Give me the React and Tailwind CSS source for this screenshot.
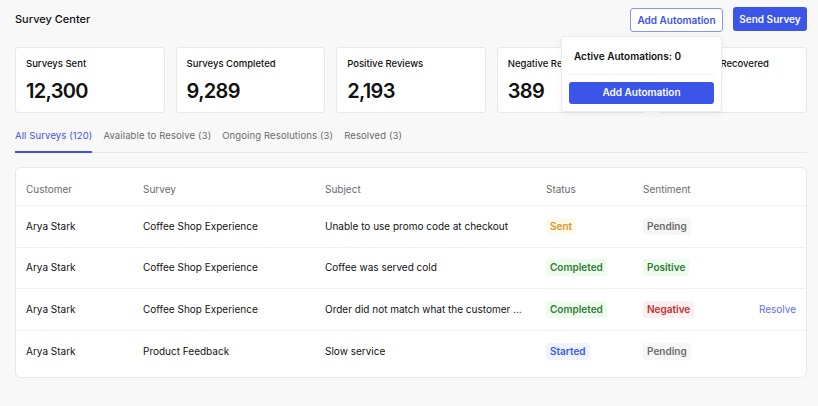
import React from 'react';

const stats = [
  { label: 'Surveys Sent', value: '12,300' },
  { label: 'Surveys Completed', value: '9,289' },
  { label: 'Positive Reviews', value: '2,193' },
  { label: 'Negative Reviews', value: '389' },
  { label: 'Customers Recovered', value: '57' },
];

const tabs = [
  'All Surveys (120)',
  'Available to Resolve (3)',
  'Ongoing Resolutions (3)',
  'Resolved (3)',
];

const badgeStyles = {
  Sent: 'bg-[#fefbea] text-[#e48f2a]',
  Completed: 'bg-[#eefcee] text-[#2e7d32]',
  Started: 'bg-[#eef3fe] text-[#3d5ae8]',
  Pending: 'bg-[#f6f6f6] text-[#6b6b6b]',
  Positive: 'bg-[#eefcee] text-[#2e7d32]',
  Negative: 'bg-[#fdefef] text-[#c62e2e]',
};

const rows = [
  {
    customer: 'Arya Stark',
    survey: 'Coffee Shop Experience',
    subject: 'Unable to use promo code at checkout',
    status: 'Sent',
    sentiment: 'Pending',
  },
  {
    customer: 'Arya Stark',
    survey: 'Coffee Shop Experience',
    subject: 'Coffee was served cold',
    status: 'Completed',
    sentiment: 'Positive',
  },
  {
    customer: 'Arya Stark',
    survey: 'Coffee Shop Experience',
    subject: 'Order did not match what the customer wanted',
    status: 'Completed',
    sentiment: 'Negative',
    resolve: true,
  },
  {
    customer: 'Arya Stark',
    survey: 'Product Feedback',
    subject: 'Slow service',
    status: 'Started',
    sentiment: 'Pending',
  },
];

const Badge = ({ text }) => (
  <span
    className={`inline-flex items-center h-[17px] px-[4px] rounded-[3px] text-[10px] font-semibold ${badgeStyles[text]}`}
  >
    {text}
  </span>
);

const cols = 'grid grid-cols-[117px_182px_221px_97px_1fr_auto] items-center pl-[10px] pr-[10px]';

export default function App() {
  return (
    <div
      className="w-full h-[406px] bg-[#f8f8f8] pl-[15px] pr-[11px] pt-[7px] text-[#111] overflow-hidden"
      style={{ fontFamily: 'Inter, "Noto Sans", sans-serif' }}
    >
      {/* Header */}
      <div className="flex items-center justify-between h-[24px]">
        <h1 className="text-[11px] font-medium">Survey Center</h1>
        <div className="flex items-center gap-[10px]">
          <div className="relative">
            <button className="h-[24px] w-[93px] rounded-[3px] border border-[#8796f0] bg-white text-[10px] font-semibold text-[#3a55e8]">
              Add Automation
            </button>
            <div className="absolute right-[1px] top-[30px] z-10 w-[161px] rounded-[3px] border border-[#ebebeb] bg-white px-[7px] pt-[13px] pb-[7px] shadow-[0_2px_6px_rgba(0,0,0,0.05)]">
              <div className="px-[5px] text-[10px] font-semibold leading-[12px]">
                Active Automations: 0
              </div>
              <div className="mt-[12px] border-t border-[#f0f0f0]" />
              <button className="mt-[7px] h-[22px] w-full rounded-[3px] bg-[#3a55e8] text-[10px] font-semibold text-white">
                Add Automation
              </button>
            </div>
          </div>
          <button className="h-[24px] w-[74px] rounded-[3px] bg-[#3a55e8] text-[10px] font-semibold text-white">
            Send Survey
          </button>
        </div>
      </div>

      {/* Stat cards */}
      <div className="mt-[16px] grid grid-cols-5 gap-[11px]">
        {stats.map((s) => (
          <div
            key={s.label}
            className="h-[66px] rounded-[3px] border border-[#e8e8e8] bg-white px-[10px] pt-[10px]"
          >
            <p className="text-[9.5px] font-medium leading-[12px]">{s.label}</p>
            <p className="mt-[9px] text-[20px] font-semibold leading-[24px] tracking-[-0.7px]">
              {s.value}
            </p>
          </div>
        ))}
      </div>

      {/* Tabs */}
      <div className="mt-[17px] flex gap-[11px] border-b border-[#e6e6e6]">
        {tabs.map((t, i) => (
          <div
            key={t}
            className={`-mb-px border-b-2 pb-[9px] text-[9.5px] leading-[12px] tracking-[0.12px] ${
              i === 0
                ? 'border-[#3a55e8] text-[#3a55e8]'
                : 'border-transparent text-[#6b6b6b]'
            }`}
          >
            {t}
          </div>
        ))}
      </div>

      {/* Table */}
      <div className="mt-[14px] rounded-[6px] border border-[#e8e8e8] bg-white pb-[5px]">
        <div className={`${cols} h-[38px] pt-[5px] border-b border-[#f0f0f0] text-[10px] text-[#6b6b6b]`}>
          <span>Customer</span>
          <span>Survey</span>
          <span>Subject</span>
          <span>Status</span>
          <span>Sentiment</span>
          <span />
        </div>
        {rows.map((r, i) => (
          <div
            key={i}
            className={`${cols} h-[41.5px] text-[10px] ${
              i < rows.length - 1 ? 'border-b border-[#f0f0f0]' : ''
            }`}
          >
            <span>{r.customer}</span>
            <span>{r.survey}</span>
            <span className="truncate pr-[22px]">{r.subject}</span>
            <span>
              <Badge text={r.status} />
            </span>
            <span>
              <Badge text={r.sentiment} />
            </span>
            <span className="text-[#5a6ef0]">{r.resolve ? 'Resolve' : ''}</span>
          </div>
        ))}
      </div>
    </div>
  );
}
